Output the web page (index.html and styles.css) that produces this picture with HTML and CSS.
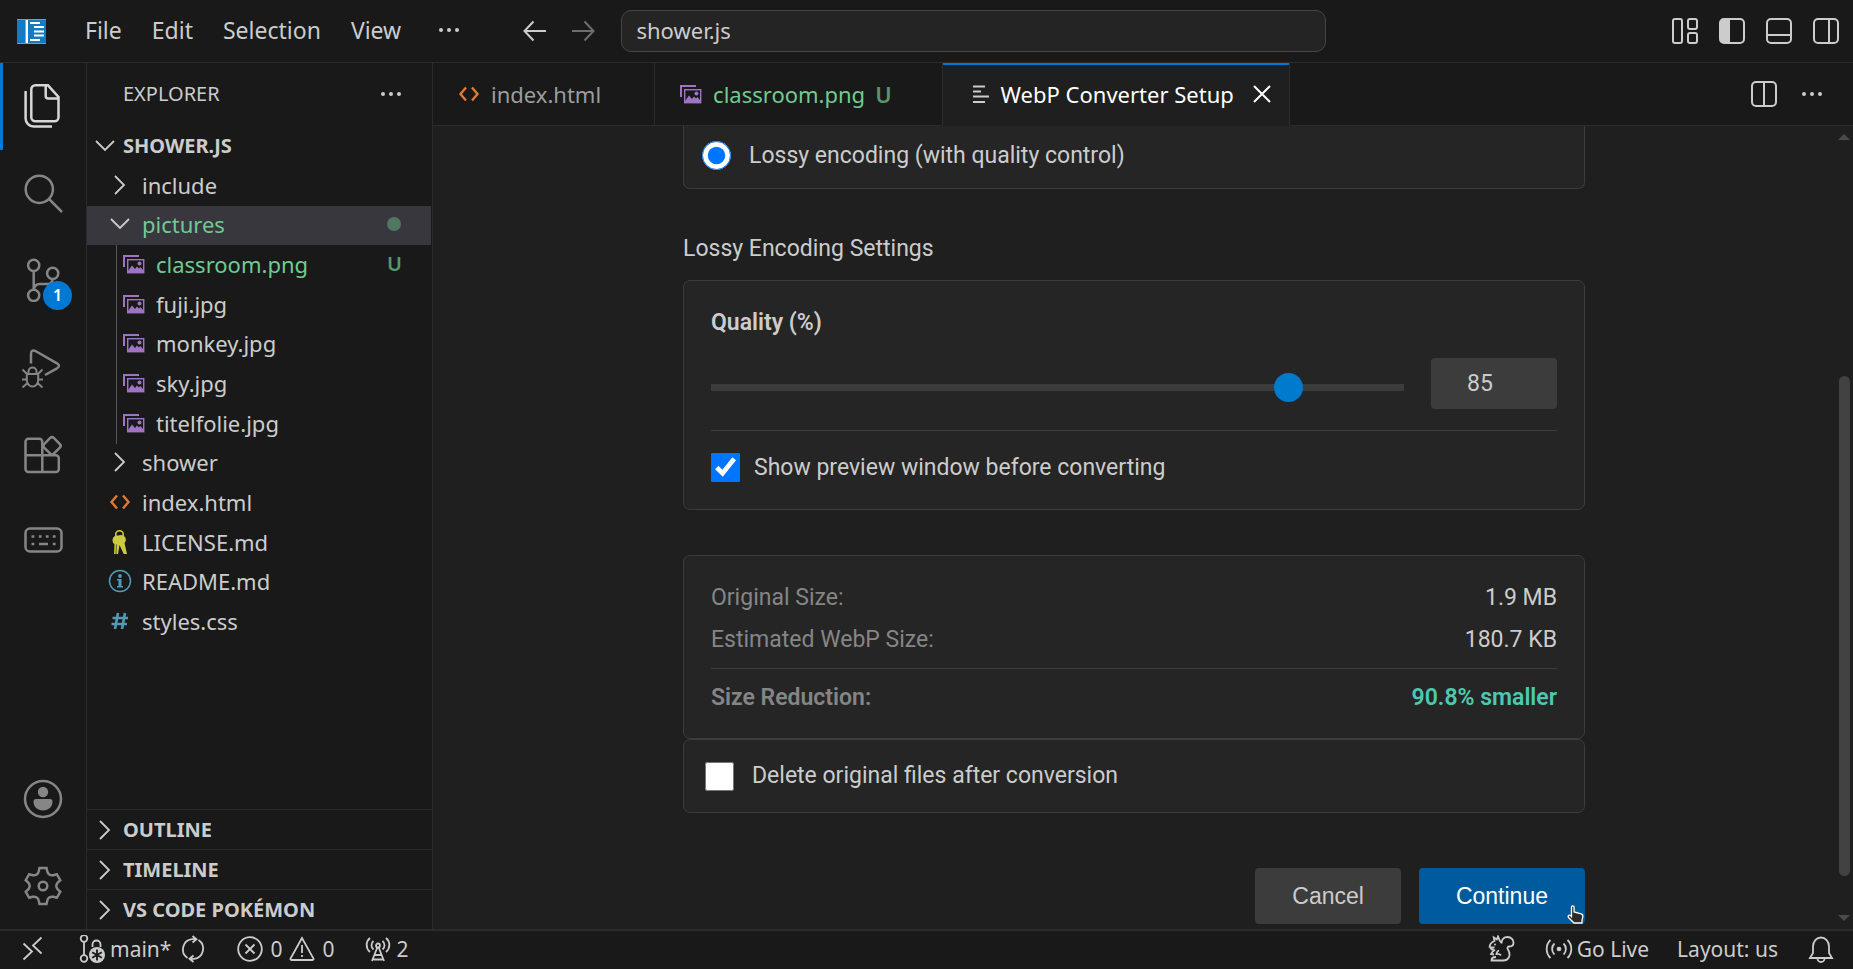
FILE: index.html
```html
<!DOCTYPE html>
<html lang="en">
<head>
    <meta charset="UTF-8">
    <meta name="viewport" content="width=device-width, initial-scale=1.0">
    <title>WebP Converter Setup - shower.js</title>
    <link rel="stylesheet" href="styles.css">
</head>
<body>
    <!-- Shared icons -->
    <svg class="icon-defs" aria-hidden="true">
        <symbol id="chevron-right" viewBox="0 0 24 24"><path d="M7 3l9 9-9 9" fill="none" stroke="currentColor" stroke-width="1.8"/></symbol>
        <symbol id="chevron-down" viewBox="0 0 24 24"><path d="M3 7l9 9 9-9" fill="none" stroke="currentColor" stroke-width="1.8"/></symbol>
        <symbol id="dots" viewBox="0 0 24 24"><g fill="currentColor"><circle cx="4" cy="12" r="2"/><circle cx="12" cy="12" r="2"/><circle cx="20" cy="12" r="2"/></g></symbol>
        <symbol id="file-html" viewBox="0 0 24 24"><path d="M9 5.500L3.500 12 9 18.500M15 5.500L20.500 12 15 18.500" fill="none" stroke="#e37933" stroke-width="2.400"/></symbol>
        <symbol id="file-image" viewBox="0 0 24 24">
            <path d="M1 15V3h16v2H3v10z" fill="#a074c4"/>
            <rect x="5.700" y="7.700" width="16" height="13" fill="none" stroke="#a074c4" stroke-width="1.400"/>
            <path d="M6 21v-2l4-5.500 3 3.500 2-2.500 2 2 1.500-1.500L21 18v3z" fill="#a074c4"/>
            <circle cx="17.500" cy="11.500" r="2" fill="#a074c4"/>
        </symbol>
    </svg>

    <header class="titlebar">
        <nav class="menu">
            <svg class="app-logo" viewBox="0 0 29 25"><path d="M0 0h29v25H0z" fill="#167abf"/><path d="M0 .5h29M0 24.500h29" stroke="#5aa5d8"/><path d="M9.800 1v23" stroke="#fff" stroke-width="2.400"/><path d="M13 4h10M17 8h10M17 12.500h10M17 16.500h10M13 21h10" stroke="#fff" stroke-width="1.800"/></svg>
            <button>File</button>
            <button>Edit</button>
            <button>Selection</button>
            <button>View</button>
            <button aria-label="More menus"><svg class="icon"><use href="#dots"/></svg></button>
        </nav>
        <div class="command">
            <button class="nav-button" aria-label="Go back"><svg class="arrow" viewBox="0 0 24 24"><path d="M23 12H2M10.500 2.500L1.500 12l9 9.500"/></svg></button>
            <button class="nav-button disabled" aria-label="Go forward"><svg class="arrow" viewBox="0 0 24 24"><path d="M1 12h21M13.500 2.500l9 9.500-9 9.500"/></svg></button>
            <button class="command-center">shower.js</button>
        </div>
        <div class="layout-actions">
            <button aria-label="Customize layout"><svg class="panel" viewBox="0 0 28 28"><rect x="2" y="2" width="9" height="24" rx="2"/><rect x="17" y="2" width="9" height="10" rx="2"/><rect x="17" y="16" width="9" height="10" rx="2"/></svg></button>
            <button aria-label="Toggle side bar"><svg class="panel" viewBox="0 0 28 28"><rect x="2" y="2" width="24" height="24" rx="4"/><path d="M5 3h6v22H5l-2-2V5z" fill="currentColor"/></svg></button>
            <button aria-label="Toggle panel"><svg class="panel" viewBox="0 0 28 28"><rect x="2" y="2" width="24" height="24" rx="4"/><path d="M2 18h24"/></svg></button>
            <button aria-label="Toggle secondary side bar"><svg class="panel" viewBox="0 0 28 28"><rect x="2" y="2" width="24" height="24" rx="4"/><path d="M17 2v24"/></svg></button>
        </div>
    </header>

    <div class="workbench">
        <nav class="activity-bar">
            <div class="activity-group top">
                <button class="active" aria-label="Explorer"><svg viewBox="0 0 44 44"><path d="M27 1.300H14.300a4 4 0 0 0-4 4v28a4 4 0 0 0 4 4h19.200a4 4 0 0 0 4-4V13L27 1.300h-2.300V12a2.500 2.500 0 0 0 2.500 2.500H38"/><path d="M4.600 7v27.500a8 8 0 0 0 8 8H31"/></svg></button>
                <button aria-label="Search"><svg viewBox="0 0 44 44"><circle cx="18.300" cy="18.300" r="13.600"/><path d="M28 28l13 13"/></svg></button>
                <button aria-label="Source Control"><svg viewBox="0 0 44 44"><circle cx="12.700" cy="7.300" r="5.600"/><circle cx="31.700" cy="15.300" r="5.600"/><circle cx="12.700" cy="37.300" r="5.600"/><path d="M12.700 13v18.500M31.700 21q-.5 5-6 5H19q-6 0-6 6"/></svg><span class="badge">1</span></button>
                <button aria-label="Run and Debug"><svg viewBox="0 0 44 44"><path d="M10 19.500V10q0-5 4.500-3L36 19.300q4 2.500 0 5L24 31"/><path d="M5.800 30h11.400v6a5.700 6.500 0 0 1-11.400 0zM7.500 30v-2.500a4 4 0 0 1 8 0V30M1.500 25.500L6 30M21.500 25.500L17 30M1 35.500h5M17 35.500h5M1.500 43.500L6.500 39M21.500 43.500L16.500 39" stroke-width="2"/></svg></button>
                <button aria-label="Extensions"><svg viewBox="0 0 44 44"><path d="M21.300 41H7.500a3 3 0 0 1-3-3V10.700a3 3 0 0 1 3-3h10.800a3 3 0 0 1 3 3zM4.500 24.300h30.300a3 3 0 0 1 3 3V38a3 3 0 0 1-3 3H21.300"/><rect x="24.200" y="8" width="13.600" height="13.600" rx="2.500" transform="rotate(45 31 14.800)"/></svg></button>
                <button aria-label="Keyboard"><svg viewBox="0 0 44 44"><rect x="4.500" y="10.500" width="36" height="23" rx="4.500"/><path d="M10.500 18.500h2.800M17.800 18.500h2.800M24.800 18.500h2.800M31.800 18.500h2.800M10.500 26h2.800M18 26h9M31.800 26h2.800"/></svg></button>
            </div>
            <div class="activity-group bottom">
                <button aria-label="Accounts"><svg viewBox="0 0 44 44"><circle cx="22" cy="22" r="18"/><g fill="currentColor" stroke="none"><circle cx="22" cy="15" r="5.200"/><path d="M15 22h14q2.500 0 2.500 2.500c0 5.500-4 9-9.500 9s-9.500-3.500-9.500-9q0-2.500 2.500-2.500z"/></g></svg></button>
                <button aria-label="Manage"><svg viewBox="0 0 44 44"><circle cx="22" cy="22" r="4.300"/><path d="M15.500 10.700Q17.300 9.500 17.700 7.500L18.500 4h7l.8 3.500q.4 2 2.200 3.200 1.900 1 3.900.5l3.400-1 3.500 6-2.600 2.500q-1.400 1.500-1.400 3.300t1.400 3.300l2.600 2.500-3.500 6-3.400-1q-2-.5-3.900.5-1.800 1.200-2.200 3.200l-.8 3.500h-7l-.8-3.500q-.4-2-2.200-3.200-1.900-1-3.900-.5l-3.400 1-3.500-6 2.600-2.500Q8.700 23.800 8.700 22t-1.400-3.300l-2.600-2.500 3.500-6 3.400 1q2 .5 3.900-.5z"/></svg></button>
            </div>
        </nav>

        <aside class="sidebar">
            <div class="sidebar-header">
                <h2>EXPLORER</h2>
                <button aria-label="Views and more actions"><svg class="icon"><use href="#dots"/></svg></button>
            </div>
            <button class="pane-header"><svg class="icon"><use href="#chevron-down"/></svg>SHOWER.JS</button>
            <ul class="tree">
                <li><svg class="icon"><use href="#chevron-right"/></svg>include</li>
                <li class="selected untracked"><svg class="icon"><use href="#chevron-down"/></svg>pictures<span class="dot"></span></li>
                <li class="child untracked"><svg class="icon"><use href="#file-image"/></svg>classroom.png<span class="status">U</span></li>
                <li class="child"><svg class="icon"><use href="#file-image"/></svg>fuji.jpg</li>
                <li class="child"><svg class="icon"><use href="#file-image"/></svg>monkey.jpg</li>
                <li class="child"><svg class="icon"><use href="#file-image"/></svg>sky.jpg</li>
                <li class="child"><svg class="icon"><use href="#file-image"/></svg>titelfolie.jpg</li>
                <li><svg class="icon"><use href="#chevron-right"/></svg>shower</li>
                <li><svg class="icon"><use href="#file-html"/></svg>index.html</li>
                <li><svg class="icon" viewBox="0 0 24 24"><circle cx="11.500" cy="4.500" r="3.800" fill="none" stroke="#cbcb41" stroke-width="1.600"/><path d="M5 8q1-3 5-2.500 5-1.500 7 1.500 2 3-.5 6L19 24l-3 .5L11.500 15 10 24.500H6L6.500 14Q3.500 12 5 8z" fill="#cbcb41"/><path d="M8.500 14.500L8 24" stroke="#191919" stroke-width=".6"/></svg>LICENSE.md</li>
                <li><svg class="icon" viewBox="0 0 24 24"><circle cx="12" cy="12" r="10.500" fill="none" stroke="#519aba" stroke-width="1.500"/><circle cx="12" cy="7" r="1.900" fill="#519aba"/><path d="M9 10h4.500v7H15v1.500H9V17h1.500v-5.500H9z" fill="#519aba"/></svg>README.md</li>
                <li><svg class="icon" viewBox="0 0 24 24"><path d="M10 4L7 20M17 4l-3 16M4.500 9h15.500M3.500 15H19" fill="none" stroke="#519aba" stroke-width="2.600"/></svg>styles.css</li>
            </ul>
            <div class="panes">
                <button class="pane-header"><svg class="icon"><use href="#chevron-right"/></svg>OUTLINE</button>
                <button class="pane-header"><svg class="icon"><use href="#chevron-right"/></svg>TIMELINE</button>
                <button class="pane-header"><svg class="icon"><use href="#chevron-right"/></svg>VS CODE POKÉMON</button>
            </div>
        </aside>

        <main class="editor">
            <div class="tabs">
                <div class="tab"><svg class="icon"><use href="#file-html"/></svg>index.html</div>
                <div class="tab untracked"><svg class="icon"><use href="#file-image"/></svg>classroom.png<span class="status">U</span></div>
                <div class="tab active"><svg class="icon" viewBox="0 0 24 24"><path d="M4 4.500h12M4 9.500h8M4 14.500h16M4 20h12" fill="none" stroke="currentColor" stroke-width="1.800"/></svg>WebP Converter Setup<button class="close" aria-label="Close tab"><svg viewBox="0 0 18 18"><path d="M1 1l16 16M17 1L1 17"/></svg></button></div>
                <div class="tab-actions">
                    <button aria-label="Split editor"><svg class="panel" viewBox="0 0 28 28"><rect x="2" y="2" width="24" height="24" rx="4"/><path d="M14 2v24"/></svg></button>
                    <button aria-label="More actions"><svg class="icon"><use href="#dots"/></svg></button>
                </div>
            </div>

            <div class="webview">
                <form class="converter">
                    <div class="card option">
                        <input type="radio" name="encoding" id="lossy" checked>
                        <label for="lossy">Lossy encoding (with quality control)</label>
                    </div>

                    <h3>Lossy Encoding Settings</h3>
                    <div class="card settings">
                        <label class="quality-label" for="quality">Quality (%)</label>
                        <div class="quality-row">
                            <input type="range" id="quality" min="1" max="100" value="85">
                            <input type="number" class="quality-value" aria-label="Quality value" min="1" max="100" value="85">
                        </div>
                        <div class="preview-row">
                            <input type="checkbox" id="preview" checked>
                            <label for="preview">Show preview window before converting</label>
                        </div>
                    </div>

                    <dl class="card sizes">
                        <div><dt>Original Size:</dt><dd>1.9 MB</dd></div>
                        <div><dt>Estimated WebP Size:</dt><dd>180.7 KB</dd></div>
                        <div class="reduction"><dt>Size Reduction:</dt><dd>90.8% smaller</dd></div>
                    </dl>
                    <div class="card delete-row">
                        <input type="checkbox" id="delete">
                        <label for="delete">Delete original files after conversion</label>
                    </div>

                    <div class="buttons">
                        <button type="button" class="cancel">Cancel</button>
                        <button type="button" class="continue">Continue<svg class="pointer" viewBox="0 0 17 19"><path d="M4.500 2.500q0-1.700 1.300-1.700t1.300 1.700V7l7 1.800q2 .6 1.700 3L15 15.500V18H7L1.500 12.500Q.5 11 2 10.200q1.200-.3 2.500 1.300z" fill="#2b2b2b" stroke="#fff" stroke-width="1.300"/></svg></button>
                    </div>
                </form>
                <div class="scrollbar">
                    <span class="scroll-up"></span>
                    <div class="scroll-track"><div class="scroll-thumb"></div></div>
                    <span class="scroll-down"></span>
                </div>
            </div>
        </main>
    </div>

    <footer class="statusbar">
        <button class="remote" aria-label="Open a remote window"><svg viewBox="0 0 28 28"><path d="M4.500 8.500l8.500 8-8.500 8M22.500 2.500l-8.500 8 8.500 8"/></svg></button>
        <button class="branch"><svg viewBox="0 0 28 28"><circle cx="6" cy="3.500" r="3.300"/><circle cx="6" cy="23.500" r="3.300"/><path d="M6 7v13M14.500 12V9.500a4 4 0 0 1 8 0V12"/><circle cx="19" cy="20" r="8" fill="currentColor" stroke="none"/><path d="M19 14.500v11M14.200 17.300l9.600 5.500M14.200 22.800l9.600-5.500" stroke="#191919"/></svg>main*</button>
        <button class="sync" aria-label="Synchronize changes"><svg viewBox="0 0 28 28"><path d="M8.500 23A10.300 10.300 0 0 1 13 4.200h4M19.500 5A10.300 10.300 0 0 1 15 23.800h-4M13.500 1l4 3.200-4 3.300M14.500 20.500l-4 3.300 4 3.200"/></svg></button>
        <button class="problems"><svg viewBox="0 0 28 28"><circle cx="14" cy="14" r="11.800"/><path d="M9.500 9.500l9 9M18.500 9.500l-9 9"/></svg>0<svg viewBox="0 0 28 28"><path d="M14 3L2.500 23.500q-.5 1.500 1 1.500h21q1.500 0 1-1.500zM14 10v8M14 20v2"/></svg>0</button>
        <button class="ports"><svg viewBox="0 0 28 28"><circle cx="14" cy="10.500" r="2"/><path d="M13.300 12.500L8 26M14.700 12.500L20 26M10.500 20h7M9.500 24.500h9M9.500 14.500a5.500 5.500 0 0 1 0-8.500M18.500 14.500a5.500 5.500 0 0 0 0-8.500M6 17a9 9 0 0 1 0-14M22 17a9 9 0 0 0 0-14"/></svg>2</button>
        <span class="spacer"></span>
        <button class="squirrel" aria-label="Squirrel"><svg viewBox="0 0 28 28"><path d="M2.500 12.500c0-3 1.500-5 5-6.500L6.800 2.500l3 2L11 1.500l1.800 4.200q1.500 1 1.700 2.800C14.500 4 17 2 20.500 2c4 0 6 3 6 5.500 0 2.500-1.500 4-4 4-2 0-2.500 1.500-1.500 3 3 5 1.500 11-5 11H4.500c0-2.500 2-3.500 4.500-3.500M2.500 12.500h5M3.500 12.500q1 3 4.500 2.500M8 15q-3 1.500-4 4l3 .5M12 15.500q-2 .5-2.500 3.500 3-.5 4.500 1.500"/><circle cx="8" cy="9.500" r="1" fill="currentColor" stroke="none"/></svg></button>
        <button class="live"><svg viewBox="0 0 28 28"><circle cx="14" cy="14" r="2.300" fill="currentColor" stroke="none"/><path d="M9.500 8.500a7.500 7.500 0 0 0 0 11M18.500 8.500a7.500 7.500 0 0 1 0 11M5.500 5a12.500 12.500 0 0 0 0 18M22.500 5a12.500 12.500 0 0 1 0 18"/></svg>Go Live</button>
        <button class="layout">Layout: us</button>
        <button class="bell" aria-label="Notifications"><svg viewBox="0 0 28 28"><path d="M3 23l3-5v-6.500a8 9 0 0 1 16 0V18l3 5zM10.500 23.500a3.500 3.500 0 0 0 7 0"/></svg></button>
    </footer>
</body>
</html>
```

FILE: styles.css
```css
* {
    margin: 0;
    padding: 0;
    box-sizing: border-box;
}
body {
    display: flex;
    flex-direction: column;
    height: 100vh;
    overflow: hidden;
    background: #191919;
    color: #cccccc;
    font-family: 'Noto Sans', sans-serif;
    font-size: 22px;
    line-height: 28px;
}
button {
    display: flex;
    align-items: center;
    border: none;
    background: none;
    color: inherit;
    font: inherit;
    cursor: pointer;
    white-space: nowrap;
}
ul {
    list-style: none;
}
.icon-defs {
    position: absolute;
    width: 0;
    height: 0;
}
.icon {
    width: 24px;
    height: 24px;
    flex-shrink: 0;
}
.panel {
    width: 28px;
    height: 28px;
    fill: none;
    stroke: currentColor;
    stroke-width: 2;
}
.untracked {
    color: #73c991;
}

/* Title bar */
.titlebar {
    display: flex;
    align-items: center;
    height: 63px;
    border-bottom: 1px solid #2b2b2b;
}
.menu,
.layout-actions {
    display: flex;
    align-items: center;
    flex: 1 1 0;
}
.menu {
    padding-left: 17px;
    font-size: 23px;
}
.menu button {
    padding: 0 15px 2px;
}
.menu .icon {
    margin-left: 6px;
}
.app-logo {
    width: 29px;
    height: 25px;
    margin-right: 24px;
}
.command {
    display: flex;
    align-items: center;
    gap: 8px;
    padding-right: 16px;
}
.nav-button {
    justify-content: center;
    width: 40px;
    height: 40px;
}
.arrow {
    width: 24px;
    height: 24px;
    fill: none;
    stroke: currentColor;
    stroke-width: 2;
}
.disabled {
    color: #6e6e6e;
}
.command-center {
    width: 38vw;
    height: 42px;
    margin-left: 10px;
    padding: 0 14px 2px;
    background: #242424;
    border: 1px solid #454545;
    border-radius: 10px;
}
.layout-actions {
    justify-content: flex-end;
    gap: 19px;
    padding-right: 13px;
}

/* Activity bar */
.workbench {
    display: flex;
    flex: 1;
    min-height: 0;
}
.activity-bar {
    display: flex;
    flex-direction: column;
    justify-content: space-between;
    width: 87px;
    border-right: 1px solid #2b2b2b;
    color: #868686;
}
.activity-group {
    display: flex;
    flex-direction: column;
}
.top {
    height: 520px;
}
.bottom {
    height: 173px;
}
.activity-group button {
    position: relative;
    flex: 1;
    justify-content: center;
    border-left: 3px solid transparent;
    padding-right: 3px;
}
.activity-group .active {
    border-left-color: #0078d4;
    color: #d7d7d7;
}
.activity-group svg {
    width: 44px;
    height: 44px;
    fill: none;
    stroke: currentColor;
    stroke-width: 2.5;
}
.badge {
    position: absolute;
    right: 14px;
    bottom: 13px;
    width: 29px;
    height: 29px;
    border-radius: 50%;
    background: #0078d4;
    color: #ffffff;
    font-size: 16px;
    font-weight: 600;
    line-height: 29px;
    text-align: center;
}

/* Explorer */
.sidebar {
    display: flex;
    flex-direction: column;
    width: 346px;
    border-right: 1px solid #2b2b2b;
}
.sidebar-header {
    display: flex;
    align-items: center;
    justify-content: space-between;
    height: 63px;
    padding: 0 29px 2px 36px;
}
.sidebar-header h2 {
    font-size: 20px;
    font-weight: 400;
}
.sidebar .icon {
    margin-right: 10px;
}
.sidebar .sidebar-header .icon {
    margin-right: 0;
}
.pane-header {
    height: 40px;
    padding-left: 6px;
    font-size: 20px;
    font-weight: 700;
}
.sidebar .pane-header .icon {
    margin-right: 6px;
}
.tree {
    display: grid;
    grid-auto-rows: 1fr;
    height: 476px;
    margin-right: 1px;
}
.tree li {
    display: flex;
    align-items: center;
    padding: 0 29px 2px 21px;
}
.tree .selected {
    background: #37373d;
}
.tree .selected .icon {
    color: #cccccc;
}
.tree .child {
    margin-left: 29px;
    padding-left: 5px;
    border-left: 1px solid #585858;
}
.dot {
    width: 14px;
    height: 14px;
    margin-left: auto;
    margin-right: 1px;
    border-radius: 50%;
    background: #50775f;
}
.status {
    color: #589868;
    font-weight: 600;
}
.tree .status {
    margin-left: auto;
    font-size: 20px;
}
.panes {
    margin-top: auto;
}
.panes .pane-header {
    width: 100%;
    border-top: 1px solid #2b2b2b;
}

/* Tabs */
.editor {
    display: flex;
    flex-direction: column;
    flex: 1;
    min-width: 0;
    background: #1f1f1f;
}
.tabs {
    display: flex;
    height: 63px;
    background: #191919;
}
.tab {
    display: flex;
    align-items: center;
    padding: 0 53px 1px 24px;
    border-right: 1px solid #2b2b2b;
    border-bottom: 1px solid #2b2b2b;
    color: #9d9d9d;
}
.tab .icon {
    margin-right: 10px;
}
.tab.untracked {
    padding-right: 50px;
    color: #73c991;
}
.tab .status {
    margin-left: 10px;
}
.tab.active {
    padding: 0 18px 2px 26px;
    border-bottom: none;
    background: #1f1f1f;
    box-shadow: inset 0 2px #0078d4;
    color: #ffffff;
}
.tab.active .icon {
    margin-right: 8px;
    color: #cccccc;
}
.close {
    margin-left: 19px;
}
.close svg {
    width: 18px;
    height: 18px;
    fill: none;
    stroke: currentColor;
    stroke-width: 2;
}
.tab-actions {
    display: flex;
    flex: 1;
    align-items: center;
    justify-content: flex-end;
    gap: 22px;
    padding-right: 29px;
    border-bottom: 1px solid #2b2b2b;
}

/* Converter form */
.webview {
    display: flex;
    flex: 1;
    min-height: 0;
    overflow: hidden;
    font-family: Roboto, sans-serif;
    font-size: 23px;
}
.converter {
    width: 902px;
    margin: 0 auto;
}
.card {
    background: #252525;
    border: 1px solid #3c3c3c;
    border-radius: 7px;
}
.option,
.preview-row,
.delete-row {
    display: flex;
    align-items: center;
}
.option {
    height: 63px;
    padding: 0 18px 3px;
    gap: 18px;
    border-top: none;
    border-radius: 0 0 7px 7px;
}
.converter input[type="radio"],
.converter input[type="checkbox"] {
    width: 29px;
    height: 29px;
}
.converter h3 {
    margin: 46px 0 17px;
    font-size: 23px;
    font-weight: 400;
}
.settings {
    padding: 28px 27px 27px;
}
.quality-label {
    display: block;
    margin-bottom: 21px;
    font-weight: 600;
}
.quality-row {
    display: flex;
    align-items: center;
    gap: 27px;
    padding-bottom: 21px;
    border-bottom: 1px solid #3c3c3c;
}
input[type="range"] {
    flex: 1;
    height: 7px;
    margin-top: 7px;
    appearance: none;
    background: #3c3c3c;
}
input[type="range"]::-webkit-slider-thumb {
    appearance: none;
    width: 29px;
    height: 29px;
    border-radius: 50%;
    background: #007acc;
}
.quality-value {
    width: 126px;
    height: 51px;
    padding-right: 28px;
    appearance: textfield;
    border: none;
    border-radius: 4px;
    background: #3c3c3c;
    color: #cccccc;
    font: inherit;
    text-align: center;
}
.quality-value::-webkit-inner-spin-button {
    display: none;
}
.preview-row {
    gap: 14px;
    padding: 22px 0 0;
}
.sizes {
    margin-top: 45px;
    padding: 21px 27px 19px;
}
.sizes div {
    display: flex;
    justify-content: space-between;
    padding: 7px 0;
}
.sizes dt {
    color: #858585;
}
.sizes .reduction {
    margin-top: 7px;
    padding-top: 15px;
    border-top: 1px solid #3c3c3c;
    font-weight: 600;
}
.reduction dd {
    color: #4ec9b0;
}
.delete-row {
    height: 74px;
    padding: 0 21px;
    gap: 18px;
}
.buttons {
    display: flex;
    justify-content: flex-end;
    gap: 18px;
    margin-top: 55px;
}
.buttons button {
    position: relative;
    height: 56px;
    padding: 0 37px;
    border-radius: 4px;
    font-family: 'Liberation Sans', sans-serif;
}
.cancel {
    background: #3c3c3c;
}
.continue {
    background: #005a9e;
    color: #ffffff;
}
.pointer {
    position: absolute;
    right: 1px;
    bottom: 0;
    width: 17px;
    height: 19px;
}
.scrollbar {
    display: flex;
    flex-direction: column;
    align-items: center;
    width: 18px;
    padding: 8px 0;
}
.scroll-up,
.scroll-down {
    border: 6px solid transparent;
}
.scroll-up {
    border-top: none;
    border-bottom-color: #4a4a4a;
}
.scroll-down {
    border-bottom: none;
    border-top-color: #4a4a4a;
}
.scroll-track {
    display: flex;
    flex-direction: column;
    justify-content: flex-end;
    flex: 1;
    padding-bottom: 39px;
}
.scroll-thumb {
    width: 11px;
    height: 68%;
    border-radius: 6px;
    background: #424242;
}

/* Status bar */
.statusbar {
    display: flex;
    align-items: center;
    height: 40px;
    padding: 0 18px 2px 19px;
    border-top: 2px solid #2b2b2b;
    font-size: 21px;
}
.statusbar svg {
    width: 28px;
    height: 28px;
    fill: none;
    stroke: currentColor;
    stroke-width: 1.8;
}
.statusbar button {
    gap: 4px;
}
.branch {
    margin-left: 31px;
}
.sync {
    margin-left: 8px;
}
.problems {
    margin-left: 29px;
}
.statusbar .problems {
    gap: 6px;
}
.ports {
    margin-left: 30px;
}
.spacer {
    flex: 1;
}
.live {
    margin-left: 30px;
}
.layout {
    margin-left: 28px;
}
.bell {
    margin-left: 29px;
}
```
